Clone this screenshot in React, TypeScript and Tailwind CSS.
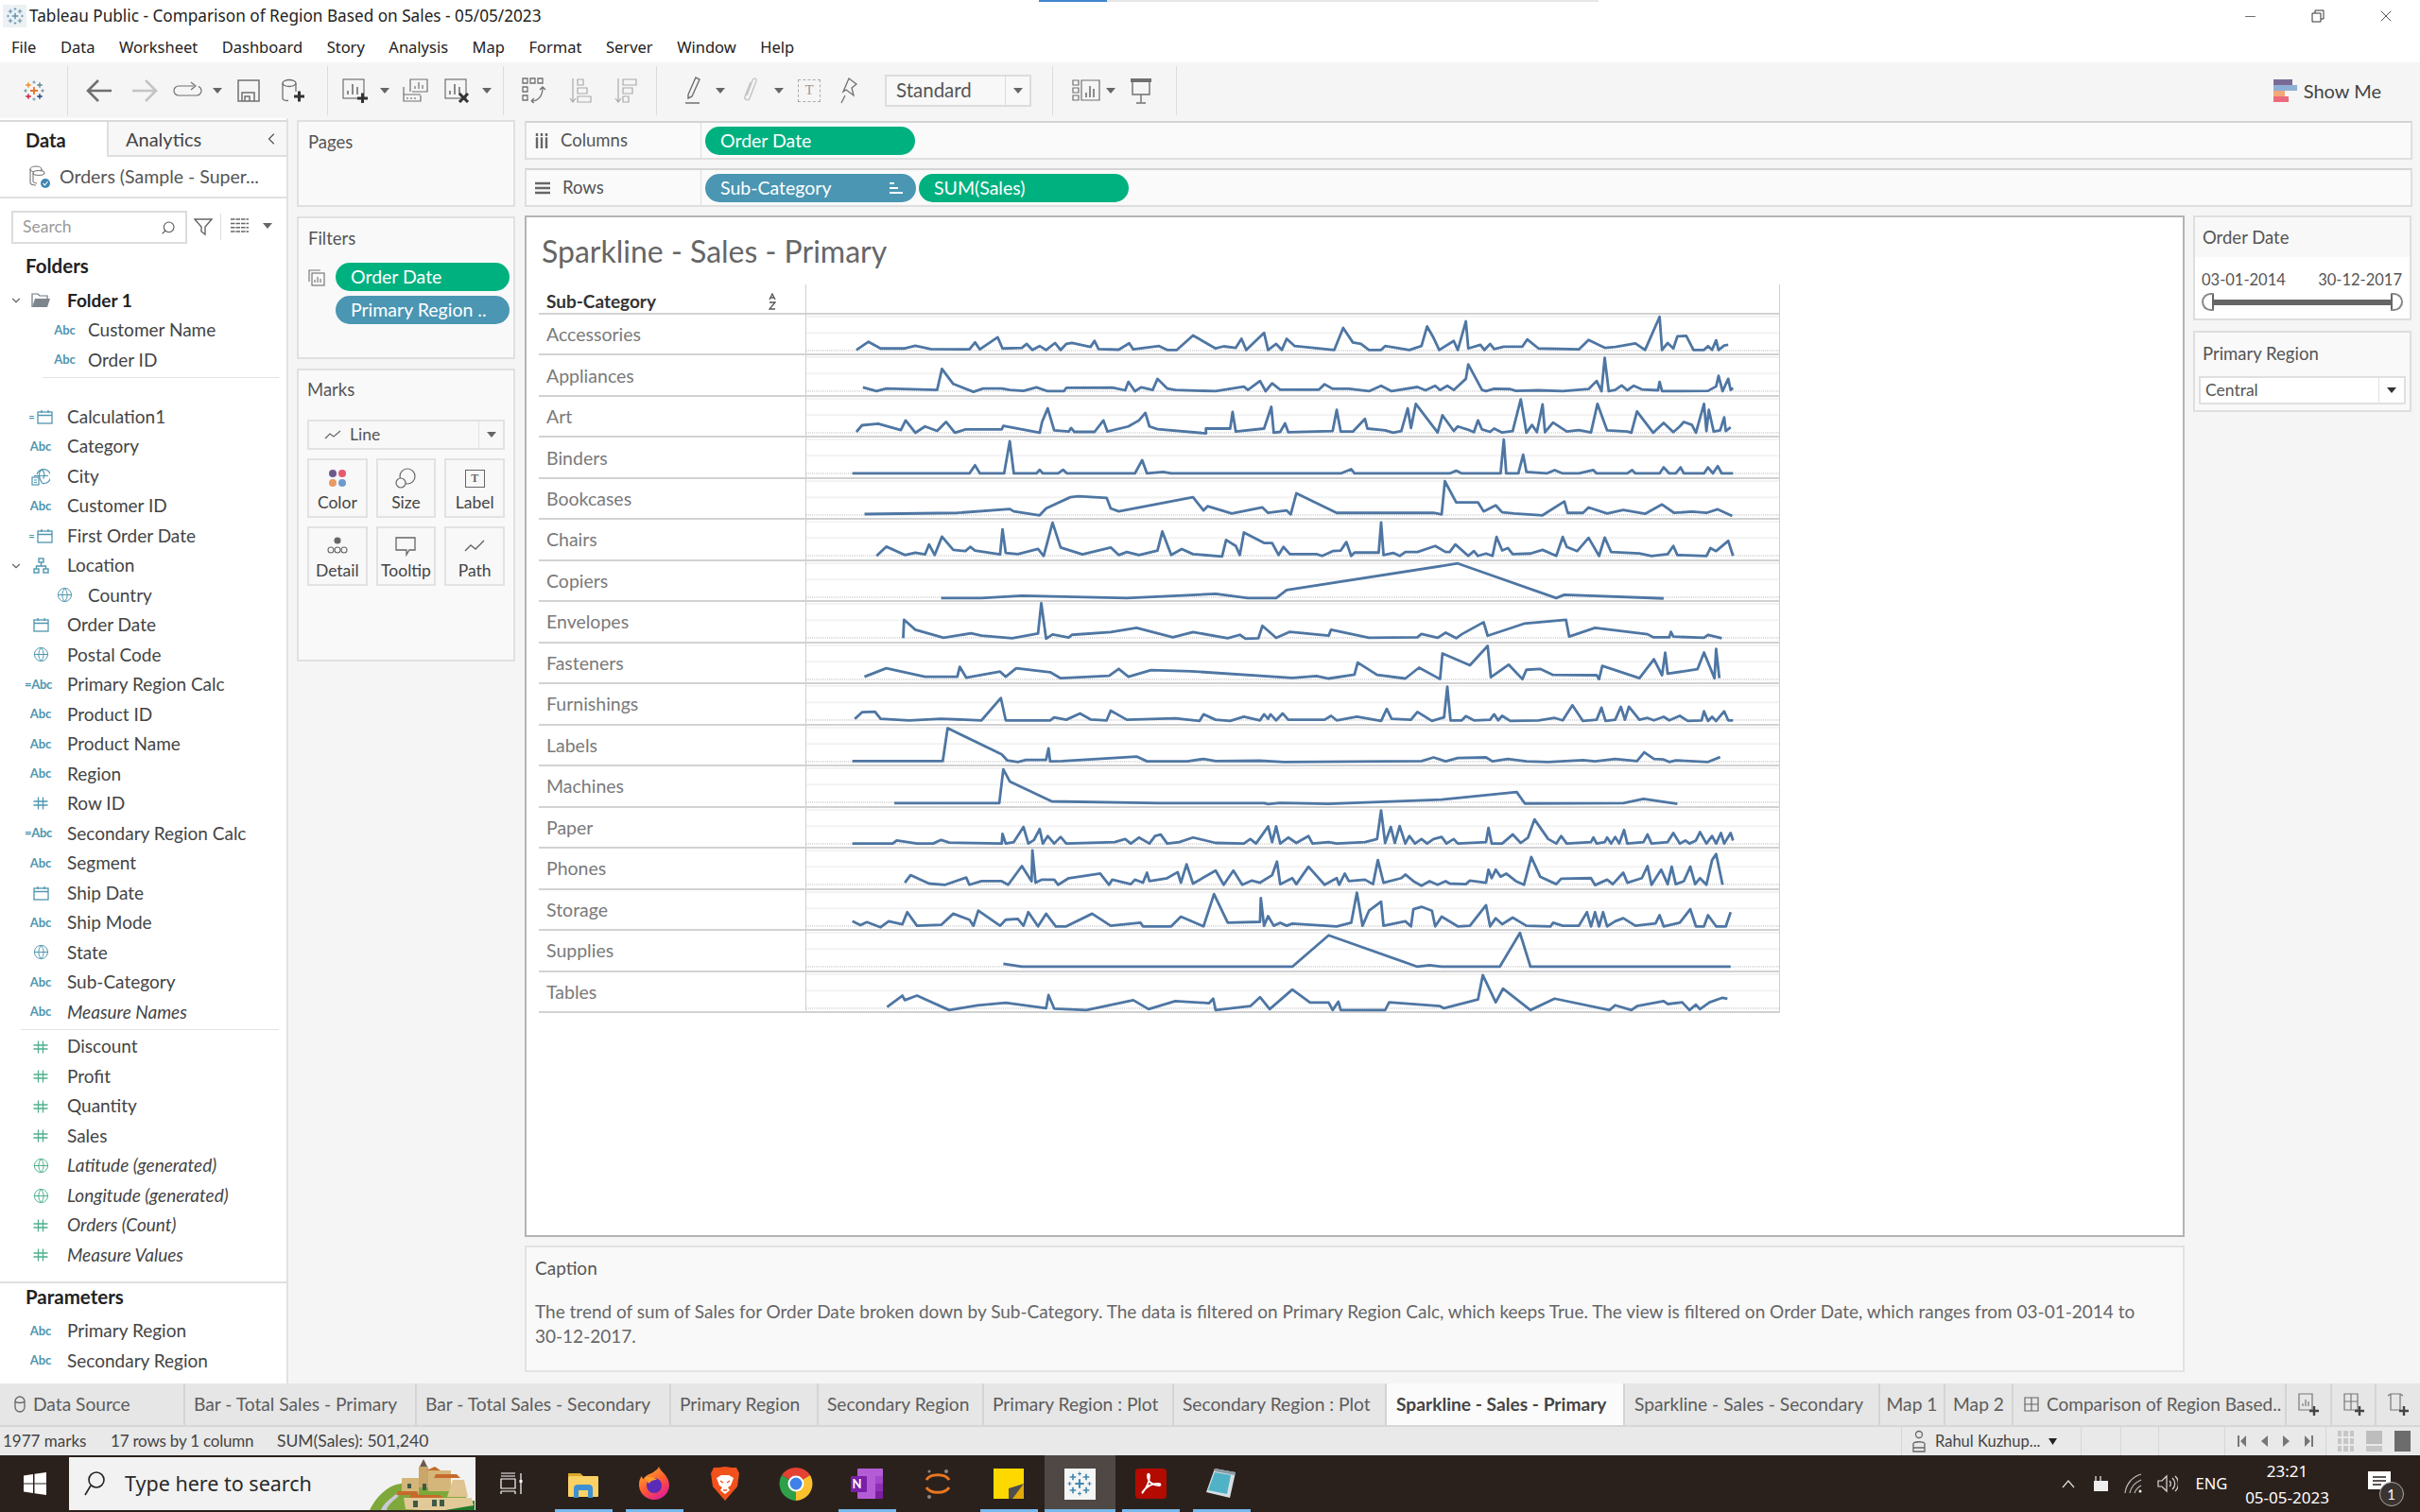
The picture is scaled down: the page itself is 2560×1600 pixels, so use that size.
import { Globe, ChevronDown, ChevronLeft, Search, Minus, X } from 'lucide-react';

const FIELD_BLUE = '#4f96b0';
const FIELD_GREEN = '#4fb08c';

const SPARKS = [
  { name: 'Accessories', top: 308, pts: '405,425 420,398 435,420 465,420 478,411 497,422 545,423 552,400 558,423 580,383 586,420 610,418 616,405 623,425 632,412 640,425 651,402 658,425 665,405 672,402 695,415 700,395 705,422 730,424 743,403 748,423 780,412 790,425 802,425 822,377 850,420 860,413 875,418 882,388 888,425 910,368 915,425 925,405 932,425 938,388 948,412 997,425 1008,352 1020,400 1030,405 1040,425 1055,425 1060,412 1090,425 1105,412 1112,347 1120,385 1127,425 1145,395 1150,425 1160,330 1163,420 1178,408 1183,425 1190,405 1195,422 1207,414 1230,414 1236,390 1250,420 1300,423 1312,392 1332,418 1345,415 1370,403 1382,425 1400,315 1403,425 1410,402 1417,420 1422,380 1433,378 1442,425 1455,425 1460,412 1465,425 1470,393 1473,425 1480,410 1485,408' },
  { name: 'Appliances', top: 437, pts: '413,543 430,556 442,547 505,552 511,482 525,532 550,558 562,547 585,547 595,552 612,555 628,543 642,556 662,556 665,545 722,544 738,553 742,525 750,556 758,543 772,552 778,515 790,547 800,552 850,556 885,541 890,552 905,522 912,556 920,530 930,551 978,551 985,533 995,548 1015,548 1040,556 1055,538 1068,556 1100,542 1110,553 1122,538 1128,552 1137,538 1145,552 1160,515 1163,467 1180,552 1185,556 1195,548 1215,549 1222,555 1250,553 1280,556 1312,549 1322,522 1328,556 1332,445 1337,556 1345,552 1353,537 1360,553 1368,538 1378,550 1398,553 1400,525 1403,556 1460,555 1470,540 1473,505 1478,556 1485,515 1488,552 1491,545' },
  { name: 'Art', top: 567, pts: '405,683 412,661 432,656 460,677 466,645 478,686 490,665 505,680 516,650 527,686 540,675 585,675 587,663 632,686 635,650 642,605 650,678 668,682 671,670 675,683 700,683 711,645 716,682 742,665 755,645 763,620 768,665 778,674 838,688 838,672 868,672 871,617 875,682 910,672 919,600 922,686 930,683 936,655 940,684 995,680 1000,610 1005,682 1020,682 1035,640 1038,672 1060,678 1070,686 1080,680 1088,605 1092,670 1098,590 1125,685 1131,628 1145,680 1150,665 1165,678 1170,684 1175,645 1180,675 1190,683 1195,672 1205,685 1218,680 1228,575 1235,686 1242,660 1248,684 1255,592 1258,684 1268,652 1285,682 1300,677 1315,685 1323,590 1335,678 1360,682 1365,686 1372,615 1392,686 1405,653 1417,684 1425,665 1430,650 1440,660 1445,686 1455,590 1458,680 1461,610 1467,682 1475,678 1480,635 1482,680 1488,668' },
  { name: 'Binders', top: 698, pts: '400,817 545,817 552,790 558,817 588,817 595,710 600,817 628,817 632,805 636,817 655,817 661,805 666,817 750,817 759,773 765,817 785,812 795,817 1005,817 1018,803 1022,817 1140,817 1148,808 1155,817 1203,817 1207,705 1210,817 1225,817 1231,755 1235,812 1260,817 1270,806 1280,817 1300,817 1318,806 1322,817 1360,817 1366,806 1370,817 1400,817 1405,797 1412,817 1420,817 1426,797 1430,817 1455,817 1460,797 1466,817 1472,793 1477,817 1491,817' },
  { name: 'Bookcases', top: 828, pts: '415,944 530,940 595,927 600,935 632,948 640,925 670,888 680,885 715,890 720,925 730,935 822,888 835,932 840,918 870,942 908,922 915,940 938,932 943,945 950,875 1000,940 1120,940 1130,945 1134,835 1148,905 1175,905 1182,935 1197,915 1205,938 1220,942 1255,948 1282,902 1286,940 1305,940 1312,922 1335,942 1355,930 1382,943 1403,912 1418,940 1440,936 1458,940 1472,928 1490,950' },
  { name: 'Chairs', top: 958, pts: '430,1078 442,1047 465,1075 478,1067 490,1073 495,1040 502,1075 511,1014 525,1058 540,1062 546,1048 552,1060 583,1073 586,990 590,1068 605,1072 630,1055 637,1078 648,968 658,1050 685,1073 720,1050 730,1075 740,1065 755,1075 778,1060 784,997 795,1075 808,1055 822,1072 858,1080 863,1025 875,1045 880,1075 885,1000 910,1035 920,1035 928,1075 934,1048 942,1072 975,1072 982,1078 995,1062 1005,1060 1012,1032 1018,1078 1022,1067 1052,1067 1055,967 1058,1075 1070,1068 1078,1078 1085,1065 1100,1065 1122,1045 1135,1065 1140,1065 1147,1040 1163,1078 1170,1062 1175,1078 1185,1070 1193,1078 1198,1015 1205,1060 1212,1052 1218,1072 1240,1070 1255,1058 1272,1078 1280,1015 1285,1048 1298,1062 1312,1018 1325,1078 1332,1017 1340,1065 1375,1070 1390,1078 1410,1072 1417,1045 1422,1075 1458,1078 1463,1052 1470,1062 1485,1028 1491,1078' },
  { name: 'Copiers', top: 1090, pts: '510,1212 560,1212 610,1204 740,1212 850,1198 890,1212 925,1212 938,1185 1150,1097 1272,1212 1282,1201 1405,1213' },
  { name: 'Envelopes', top: -12, pts: '463,108 464,47 478,80 513,107 547,92 560,100 598,108 630,93 634,-8 640,110 648,96 668,106 672,97 720,88 752,74 797,105 822,88 865,108 880,97 887,110 903,108 908,67 925,107 942,87 990,100 993,80 1040,107 1100,105 1105,94 1125,107 1135,90 1148,108 1155,95 1182,55 1187,100 1232,60 1284,47 1288,103 1320,74 1385,95 1392,105 1412,105 1414,87 1417,103 1455,107 1460,97 1477,108' },
  { name: 'Fasteners', top: 120, pts: '415,230 442,202 490,230 530,230 533,197 541,233 583,213 590,230 603,202 645,215 658,235 718,227 730,204 742,230 770,208 820,212 945,234 975,228 990,236 1022,223 1026,183 1050,224 1085,236 1102,200 1128,238 1131,153 1165,192 1187,128 1191,232 1213,190 1230,238 1235,207 1252,204 1268,224 1322,225 1325,238 1329,194 1375,235 1393,172 1403,225 1407,150 1410,220 1447,205 1455,150 1468,235 1470,138 1474,235' },
  { name: 'Furnishings', top: 250, pts: '403,365 412,343 428,341 435,365 470,370 510,365 560,370 584,296 590,370 645,370 650,360 665,368 682,347 695,367 715,370 720,338 740,368 800,363 830,372 835,350 850,368 868,372 885,358 905,370 910,350 915,365 918,350 925,370 933,347 940,368 985,368 993,355 1000,370 1025,358 1055,372 1062,332 1068,365 1092,368 1100,342 1118,372 1133,360 1137,258 1141,370 1155,370 1160,356 1170,370 1190,368 1195,350 1200,370 1205,355 1215,372 1250,370 1270,362 1280,370 1292,320 1305,372 1322,368 1328,328 1333,372 1345,368 1352,325 1357,368 1362,325 1375,368 1385,362 1393,370 1405,358 1412,370 1425,355 1435,372 1452,370 1455,340 1460,372 1465,358 1470,372 1480,340 1485,370 1491,370' },
  { name: 'Labels', top: 380, pts: '400,497 512,497 518,388 585,475 592,495 605,500 615,493 640,493 643,455 645,498 660,497 752,482 765,498 815,498 835,490 850,497 905,496 935,500 1105,497 1120,485 1135,498 1150,487 1185,485 1193,498 1212,490 1235,498 1262,500 1305,494 1320,498 1345,490 1372,497 1381,468 1393,490 1405,492 1412,500 1420,495 1460,500 1475,484' },
  { name: 'Machines', top: 510, pts: '452,632 582,632 587,520 595,560 647,626 780,632 910,632 915,635 930,631 990,634 1130,620 1223,595 1233,633 1355,632 1380,618 1422,634' },
  { name: 'Paper', top: 642, pts: '400,760 450,760 455,750 480,760 500,760 510,748 520,757 585,760 586,728 590,760 600,755 612,705 618,760 625,748 632,712 636,760 642,735 650,760 658,738 665,760 725,755 738,745 745,760 755,740 768,760 775,735 782,730 790,760 805,755 822,740 850,758 885,760 893,745 900,760 908,730 915,703 920,755 925,703 930,760 940,740 950,758 965,735 970,760 990,755 1000,760 1035,755 1050,745 1055,650 1060,758 1067,705 1072,758 1078,702 1085,760 1090,735 1097,760 1105,745 1112,760 1120,745 1130,738 1136,760 1145,745 1150,760 1185,755 1188,708 1192,760 1205,760 1218,730 1228,758 1237,740 1245,680 1262,745 1272,760 1278,735 1285,760 1315,755 1318,740 1322,760 1332,755 1335,740 1340,760 1345,738 1350,760 1356,715 1360,760 1380,755 1385,730 1390,760 1410,755 1417,725 1425,760 1432,750 1437,760 1445,750 1450,722 1458,760 1465,735 1470,760 1476,725 1480,760 1488,725 1491,750' },
  { name: 'Phones', top: 772, pts: '465,885 472,860 495,888 515,892 541,868 545,892 560,880 585,880 593,892 610,830 622,880 623,778 627,885 635,875 650,875 655,892 668,870 707,855 718,892 722,875 745,890 750,875 760,885 765,852 768,880 790,870 803,850 807,885 814,824 822,888 850,845 860,892 872,845 883,892 895,878 905,885 920,860 926,815 930,890 945,870 950,890 965,832 985,892 1000,870 1003,892 1010,855 1015,880 1035,875 1045,890 1051,810 1058,885 1080,870 1085,858 1095,880 1105,895 1115,880 1125,892 1135,880 1140,888 1160,890 1165,878 1185,885 1188,842 1192,870 1197,842 1203,865 1210,855 1222,880 1232,892 1241,800 1252,865 1272,890 1278,872 1315,870 1320,893 1335,875 1342,890 1355,852 1360,885 1378,870 1385,830 1390,892 1402,842 1410,890 1415,832 1420,890 1430,880 1438,832 1444,890 1450,870 1458,892 1465,810 1470,790 1478,892' },
  { name: 'Storage', top: 902, pts: '400,1005 410,1018 418,1008 435,1025 445,1005 462,1015 468,975 480,1020 510,1017 525,980 545,1000 550,1020 556,970 583,1020 590,1000 605,997 612,1020 618,975 630,1022 640,980 652,1022 665,1022 697,980 720,1020 757,1010 760,1022 795,1022 807,990 835,1022 848,915 865,1010 905,1007 906,928 910,1020 915,988 922,1020 930,1010 938,1020 945,1013 1000,1022 1018,1010 1025,910 1032,1020 1040,970 1055,940 1058,1020 1085,1005 1092,1022 1095,965 1105,957 1118,970 1122,1022 1130,990 1150,1022 1165,1020 1185,952 1190,1022 1197,995 1205,1015 1218,993 1235,1020 1265,1022 1268,1010 1280,1020 1300,1020 1310,975 1315,1022 1320,975 1325,1022 1330,975 1335,1022 1345,1005 1355,995 1370,1020 1395,1012 1400,985 1405,1022 1425,1010 1438,965 1445,1022 1455,1022 1460,985 1470,1022 1482,1022 1488,975' },
  { name: 'Supplies', top: 1033, pts: '587,1142 610,1152 945,1152 990,1048 1100,1152 1115,1147 1130,1152 1202,1152 1227,1040 1240,1152 1488,1152' },
  { name: 'Tables', top: 1163, pts: '443,1278 462,1240 465,1255 480,1240 520,1288 555,1272 590,1264 640,1282 643,1238 650,1283 690,1288 748,1255 767,1285 800,1258 842,1265 847,1250 850,1288 893,1275 905,1245 917,1285 945,1220 967,1263 990,1263 995,1288 1002,1260 1005,1288 1060,1288 1065,1262 1128,1275 1133,1282 1175,1253 1181,1172 1197,1262 1206,1217 1240,1288 1270,1250 1338,1288 1345,1272 1365,1288 1372,1275 1405,1258 1410,1268 1428,1262 1437,1288 1445,1270 1450,1285 1462,1262 1478,1247 1484,1250' },
];

function Plus({ x, y, r, c, w = 1.4 }: { x: number; y: number; r: number; c: string; w?: number }) {
  return <path d={`M${x - r} ${y}h${r * 2}M${x} ${y - r}v${r * 2}`} stroke={c} strokeWidth={w} fill="none" />;
}

function TableauLogo({ size, mono }: { size: number; mono?: string }) {
  const c = (v: string) => mono ?? v;
  return (
    <svg width={size} height={size} viewBox="0 0 24 24">
      <Plus x={12} y={12} r={4} c={c('#e8762b')} w={1.8} />
      <Plus x={12} y={3} r={1.7} c={c('#7099a6')} w={1} />
      <Plus x={12} y={21} r={1.7} c={c('#7099a6')} w={1} />
      <Plus x={3} y={12} r={1.7} c={c('#59879b')} w={1} />
      <Plus x={21} y={12} r={1.7} c={c('#59879b')} w={1} />
      <Plus x={6} y={6} r={2.8} c={c('#eb912b')} />
      <Plus x={18} y={6} r={2.8} c={c('#59879b')} />
      <Plus x={6} y={18} r={2.8} c={c('#c72035')} />
      <Plus x={18} y={18} r={2.8} c={c('#1f447e')} />
    </svg>
  );
}

function Caret({ className = '' }: { className?: string }) {
  return (
    <svg width="10" height="6" viewBox="0 0 10 6" className={className}>
      <path d="M0 0h10L5 6z" fill="#666" />
    </svg>
  );
}

function Sep({ className = '' }: { className?: string }) {
  return <div className={`w-px h-[52px] bg-[#dcdcdc] shrink-0 ${className}`} />;
}

function HashIcon({ color }: { color: string }) {
  return (
    <svg width="16" height="16" viewBox="0 0 16 16" fill="none" stroke={color} strokeWidth="1.3">
      <path d="M5.5 1.5v13M10.5 1.5v13M.5 6h15M.5 10h15" />
    </svg>
  );
}

function CalIcon({ color, calc }: { color: string; calc?: boolean }) {
  return (
    <div className="flex items-center gap-[2px]">
      {calc && <span className="text-[11px] leading-none font-bold" style={{ color }}>=</span>}
      <svg width="17" height="16" viewBox="0 0 17 16" fill="none" stroke={color} strokeWidth="1.3">
        <rect x="1" y="3" width="15" height="12" />
        <path d="M1 6.5h15M5 1v3M12 1v3" />
      </svg>
    </div>
  );
}

function TypeIcon({ type }: { type: string }) {
  if (type === 'abc') return <span className="text-[13px] font-bold" style={{ color: FIELD_BLUE }}>Abc</span>;
  if (type === 'eabc') return <span className="text-[13px] font-bold -ml-[5px] tracking-[-0.3px]" style={{ color: FIELD_BLUE }}>=Abc</span>;
  if (type === 'hash') return <HashIcon color={FIELD_BLUE} />;
  if (type === 'mhash') return <HashIcon color={FIELD_GREEN} />;
  if (type === 'globe') return <Globe size={17} strokeWidth={1.4} color={FIELD_BLUE} />;
  if (type === 'mglobe') return <Globe size={17} strokeWidth={1.4} color={FIELD_GREEN} />;
  if (type === 'cal') return <CalIcon color={FIELD_BLUE} />;
  if (type === 'ecal') return <CalIcon color={FIELD_BLUE} calc />;
  if (type === 'city') {
    return (
      <svg width="20" height="20" viewBox="0 0 20 20" fill="none" stroke={FIELD_BLUE} strokeWidth="1.2">
        <path d="M6 8a7.5 7.5 0 1 1 6 9.5M3 9.5h15M11 2.5c-4 4-3 10 1 15M11 2.5c4 4 3 8 1.5 10" />
        <rect x="1" y="11" width="7" height="8" fill="#fff" />
        <path d="M3 14h3M3 16.500h3" />
      </svg>
    );
  }
  if (type === 'hier') {
    return (
      <svg width="17" height="17" viewBox="0 0 17 17" fill="none" stroke={FIELD_BLUE} strokeWidth="1.4">
        <rect x="6" y="1" width="5" height="4" />
        <rect x="1" y="12" width="5" height="4" />
        <rect x="11" y="12" width="5" height="4" />
        <path d="M8.500 5v4M3.500 12V9h10v3" />
      </svg>
    );
  }
  return null;
}

function FieldRow({ type, label, nested, italic }: { type: string; label: string; nested?: boolean; italic?: boolean }) {
  return (
    <div className="h-[31.5px] flex items-center relative">
      <div className={nested ? 'w-[93px] pl-[44px] flex justify-center shrink-0' : 'w-[71px] pl-[15px] flex justify-center shrink-0'}>
        <TypeIcon type={type} />
      </div>
      {type === 'hier' && <ChevronDown size={14} color="#666" className="absolute left-[10px] top-[9px]" />}
      <span className={`text-[19px] text-[#444] whitespace-nowrap ${italic ? 'italic' : ''}`}>{label}</span>
    </div>
  );
}

function Sidebar() {
  const dims = [
    ['ecal', 'Calculation1'], ['abc', 'Category'], ['city', 'City'], ['abc', 'Customer ID'], ['ecal', 'First Order Date'],
    ['hier', 'Location'], ['globe', 'Country', 'n'], ['cal', 'Order Date'], ['globe', 'Postal Code'], ['eabc', 'Primary Region Calc'],
    ['abc', 'Product ID'], ['abc', 'Product Name'], ['abc', 'Region'], ['hash', 'Row ID'], ['eabc', 'Secondary Region Calc'],
    ['abc', 'Segment'], ['cal', 'Ship Date'], ['abc', 'Ship Mode'], ['globe', 'State'], ['abc', 'Sub-Category'], ['abc', 'Measure Names', 'i'],
  ];
  const meas = [
    ['mhash', 'Discount'], ['mhash', 'Profit'], ['mhash', 'Quantity'], ['mhash', 'Sales'], ['mglobe', 'Latitude (generated)', 'i'],
    ['mglobe', 'Longitude (generated)', 'i'], ['mhash', 'Orders (Count)', 'i'], ['mhash', 'Measure Values', 'i'],
  ];
  return (
    <aside className="w-[305px] shrink-0 bg-white border-r-2 border-[#e1e1e1] pt-[2px]">
      <div className="h-[39px] flex border-t-2 border-[#d9d9d9]">
        <div className="w-[113px] pl-[27px] flex items-center text-[20px] font-bold text-[#222]">Data</div>
        <div className="flex-1 flex items-center justify-between pl-[18px] pr-[6px] bg-[#f7f7f7] border-l-2 border-b-2 border-[#dedede] text-[20px] text-[#444]">
          Analytics
          <ChevronLeft size={20} strokeWidth={1.4} color="#555" />
        </div>
      </div>
      <div className="h-[44px] flex items-center pl-[30px] border-b-2 border-[#e0e0e0]">
        <svg width="24" height="26" viewBox="0 0 24 26" fill="none" stroke="#777" strokeWidth="1.1">
          <ellipse cx="8" cy="5" rx="6" ry="3" />
          <path d="M2 5v14c0 2 3 3 6 3M14 5v6" />
          <ellipse cx="11" cy="9" rx="6" ry="2.5" fill="#fff" />
          <path d="M5 9v9c0 1 2 2 4 2" />
          <circle cx="18" cy="20" r="5" fill="#3f86b0" stroke="none" />
          <path d="M15.5 20l2 2 3-4" stroke="#fff" />
        </svg>
        <span className="ml-[9px] text-[19.5px] text-[#555] whitespace-nowrap">Orders (Sample - Super...</span>
      </div>
      <div className="h-[48px] pt-[13px] flex pl-[12px]">
        <div className="w-[186px] h-[35px] border-2 border-[#dcdcdc] flex items-center justify-between pl-[10px] pr-[10px] text-[17.5px] text-[#9a9a9a]">
          Search
          <Search size={16} strokeWidth={1.6} color="#555" className="-scale-x-100" />
        </div>
        <svg width="20" height="20" viewBox="0 0 20 20" fill="none" stroke="#666" strokeWidth="1.4" className="ml-[7px] mt-[7px]">
          <path d="M1 2h18l-7 8v8l-4-3v-5z" />
        </svg>
        <div className="w-px h-[28px] bg-[#ddd] ml-[8px] mt-[3px]" />
        <svg width="19" height="15" viewBox="0 0 19 15" className="ml-[10px] mt-[8px]" stroke="#666" strokeWidth="1.5" strokeDasharray="4.5 1">
          <path d="M0 1h19M0 5.4h19M0 9.8h19M0 14h19" />
        </svg>
        <Caret className="ml-[15px] mt-[13px]" />
      </div>
      <div className="h-[44px] pl-[27px] pt-[10px] text-[20.5px] leading-[26px] font-bold text-[#222]">Folders</div>
      <div className="h-[31.5px] flex items-center relative pt-[1px]">
        <ChevronDown size={14} color="#666" className="absolute left-[10px] top-[9px]" />
        <svg width="21" height="16" viewBox="0 0 21 16" className="ml-[33px]">
          <path d="M1 15V1h6l2 2h8v3" fill="none" stroke="#6f7780" strokeWidth="1.2" />
          <path d="M1 15l3-9h16l-3 9z" fill="#7d858d" />
        </svg>
        <span className="ml-[17px] text-[19px] font-bold text-[#222]">Folder 1</span>
      </div>
      <FieldRow type="abc" label="Customer Name" nested />
      <FieldRow type="abc" label="Order ID" nested />
      <div className="h-[28.6px] pt-[2px] pl-[45px] pr-[8px]">
        <div className="h-px bg-[#e2e2e2]" />
      </div>
      {dims.map(([t, l, f]) => (
        <FieldRow key={l} type={t} label={l} nested={f === 'n'} italic={f === 'i'} />
      ))}
      <div className="h-[5.3px] pl-[22px] pr-[8px] pt-[2px]">
        <div className="h-px bg-[#e2e2e2]" />
      </div>
      {meas.map(([t, l, f]) => (
        <FieldRow key={l} type={t} label={l} italic={f === 'i'} />
      ))}
      <div className="h-[49px] pt-[12px]">
        <div className="h-[2px] bg-[#dfdfdf]" />
        <div className="pl-[27px] pt-[1px] text-[20.5px] leading-[26px] font-bold text-[#222]">Parameters</div>
      </div>
      <FieldRow type="abc" label="Primary Region" />
      <FieldRow type="abc" label="Secondary Region" />
    </aside>
  );
}

function Pill({ label, blue, sort, className = '' }: { label: string; blue?: boolean; sort?: boolean; className?: string }) {
  return (
    <div className={`h-[30px] rounded-full flex items-center justify-between pl-[16px] pr-[14px] text-[19.5px] text-white ${blue ? 'bg-[#4a96b3]' : 'bg-[#00b180]'} ${className}`}>
      <span className="whitespace-nowrap">{label}</span>
      {sort && (
        <svg width="14" height="14" viewBox="0 0 14 14" fill="#fff">
          <rect x="0" y="1" width="5" height="2" />
          <rect x="0" y="6" width="9" height="2" />
          <rect x="0" y="11" width="14" height="2" />
        </svg>
      )}
    </div>
  );
}

function MarkButton({ label, children }: { label: string; children: React.ReactNode }) {
  return (
    <div className="h-[63px] border-2 border-[#e2e2e2] bg-[#f8f8f8] flex flex-col items-center text-[17.5px] text-[#444]">
      <div className="h-[35px] flex items-center justify-center pt-[4px]">{children}</div>
      <span className="leading-[20px]">{label}</span>
    </div>
  );
}

function CardsColumn() {
  return (
    <div className="w-[231px] ml-[9px] shrink-0 pt-[2px] flex flex-col gap-[10px]">
      <div className="h-[92px] border-2 border-[#e0e0e0] bg-[#f9f9f9] pl-[10px] pt-[8px] text-[18.5px] text-[#555]">Pages</div>
      <div className="h-[151px] border-2 border-[#e0e0e0] bg-[#f9f9f9] relative pl-[10px] pt-[8px] text-[18.5px] text-[#555]">
        Filters
        <div className="mt-[11px] flex gap-[11px]">
          <svg width="18" height="18" viewBox="0 0 18 18" fill="none" stroke="#777" strokeWidth="1.2" className="mt-[7px] shrink-0">
            <path d="M1 13V1h12" />
            <rect x="4" y="4" width="13" height="13" />
            <path d="M7 14v-3M10 14V8M13 14v-4" />
          </svg>
          <div className="flex flex-col gap-[5px] w-[184px]">
            <Pill label="Order Date" />
            <Pill label="Primary Region .." blue className="pr-[8px]" />
          </div>
        </div>
      </div>
      <div className="h-[310px] border-2 border-[#e0e0e0] bg-[#f9f9f9] pl-[9px] pr-[9px] pt-[7px] text-[18.5px] text-[#555]">
        Marks
        <div className="mt-[17px] h-[32px] border-2 border-[#e2e2e2] bg-[#f8f8f8] flex items-center">
          <svg width="18" height="12" viewBox="0 0 18 12" fill="none" stroke="#666" strokeWidth="1.2" className="ml-[16px]">
            <path d="M1 10l5-5 4 3 7-6" />
          </svg>
          <span className="ml-[9px] flex-1 text-[17.5px] text-[#555]">Line</span>
          <div className="w-[26px] h-full border-l border-[#e2e2e2] flex items-center justify-center">
            <Caret />
          </div>
        </div>
        <div className="mt-[9px] grid grid-cols-3 gap-[9px]">
          <MarkButton label="Color">
            <svg width="20" height="20" viewBox="0 0 20 20">
              <circle cx="5" cy="5" r="4" fill="#6d5a8d" />
              <circle cx="15" cy="5" r="4" fill="#e65a6d" />
              <circle cx="5" cy="15" r="4" fill="#e89a63" />
              <circle cx="15" cy="15" r="4" fill="#6e9bcd" />
            </svg>
          </MarkButton>
          <MarkButton label="Size">
            <svg width="22" height="22" viewBox="0 0 22 22" fill="none" stroke="#666" strokeWidth="1.2">
              <circle cx="13" cy="9" r="8" />
              <circle cx="6" cy="16" r="5" fill="#f8f8f8" />
            </svg>
          </MarkButton>
          <MarkButton label="Label">
            <div className="w-[21px] h-[19px] border border-[#666] flex items-center justify-center text-[12px] font-bold font-[family-name:'Liberation_Serif',serif] text-[#666]">T</div>
          </MarkButton>
          <MarkButton label="Detail">
            <svg width="24" height="20" viewBox="0 0 24 20" fill="none" stroke="#666" strokeWidth="1.1">
              <circle cx="12" cy="4" r="3" fill="#666" />
              <circle cx="5" cy="14" r="3" />
              <circle cx="12" cy="14" r="3" />
              <circle cx="19" cy="14" r="3" />
            </svg>
          </MarkButton>
          <MarkButton label="Tooltip">
            <svg width="22" height="22" viewBox="0 0 22 22" fill="none" stroke="#666" strokeWidth="1.3">
              <path d="M1 2h20v13h-6l-3 5v-5H1z" />
            </svg>
          </MarkButton>
          <MarkButton label="Path">
            <svg width="22" height="14" viewBox="0 0 22 14" fill="none" stroke="#666" strokeWidth="1.4">
              <path d="M1 12l6-6 5 4 9-9" />
            </svg>
          </MarkButton>
        </div>
      </div>
    </div>
  );
}

function SparkRow({ name, top, pts }: { name: string; top: number; pts: string }) {
  return (
    <div className="flex h-[43.47px] border-b-2 border-[#d2d2d2]">
      <div className="w-[282px] pl-[8px] flex items-center text-[19.5px] text-[#7a7a7a] shrink-0">{name}</div>
      <div className="w-[1031px] border-l border-r border-[#cfcfcf] shrink-0">
        <svg width="100%" height="100%" viewBox={`343 ${top} 1205 130`} preserveAspectRatio="none" className="block overflow-visible">
          <line x1="343" x2="1548" y1={top + 6} y2={top + 6} stroke="#f3f3f3" strokeWidth="2" vectorEffect="non-scaling-stroke" />
          <line x1="343" x2="1548" y1={top + 60} y2={top + 60} stroke="#f3f3f3" strokeWidth="2" vectorEffect="non-scaling-stroke" />
          <line x1="343" x2="1548" y1={top + 119} y2={top + 119} stroke="#bbb" strokeWidth="1" strokeDasharray="1 1" vectorEffect="non-scaling-stroke" />
          <polyline points={pts} fill="none" stroke="#4e76a3" strokeWidth="2.8" strokeLinejoin="round" vectorEffect="non-scaling-stroke" />
        </svg>
      </div>
    </div>
  );
}

function Viz() {
  return (
    <div className="h-[1081px] border-2 border-[#b4b4b4] bg-white pl-[13px]">
      <div className="h-[71px] pt-[16px] pl-[3px] text-[32px] leading-[40px] text-[#666]">Sparkline - Sales - Primary</div>
      <div className="flex h-[32px] border-b-2 border-[#d2d2d2] w-[1313px]">
        <div className="w-[282px] pl-[8px] pr-[31px] pt-[6px] flex items-center justify-between text-[19px] font-bold text-[#333] shrink-0">
          Sub-Category
          <svg width="8" height="18" viewBox="0 0 8 18" fill="none" stroke="#555" strokeWidth="1.3">
            <path d="M1 7l3-6 3 6M2 5h4M1 10h6l-6 7h6" />
          </svg>
        </div>
        <div className="w-[1031px] border-l border-r border-[#cfcfcf]" />
      </div>
      <div className="w-[1313px]">
        {SPARKS.map((s) => (
          <SparkRow key={s.name} {...s} />
        ))}
      </div>
    </div>
  );
}

function Shelf({ label, icon, children }: { label: string; icon: React.ReactNode; children: React.ReactNode }) {
  return (
    <div className="h-[41px] border-2 border-[#dedede] border-t-[#d4d4d4] bg-[#fafafa] flex items-stretch">
      <div className="w-[185px] border-r border-[#dedede] flex items-center pl-[9px] gap-[13px] text-[18.5px] text-[#555] shrink-0">
        {icon}
        {label}
      </div>
      <div className="flex items-center pl-[3px] gap-[3px]">{children}</div>
    </div>
  );
}

function RightColumn() {
  return (
    <div className="w-[231px] ml-[9px] shrink-0 flex flex-col gap-[11px]">
      <div className="h-[111px] border-2 border-[#dedede] bg-white">
        <div className="h-[42px] bg-[#f8f8f8] pl-[8px] pt-[1px] flex items-center text-[18.5px] text-[#555]">Order Date</div>
        <div className="pl-[7px] pr-[8px] pt-[13px] flex justify-between text-[16.5px] leading-[22px] text-[#555]">
          <span>03-01-2014</span>
          <span>30-12-2017</span>
        </div>
        <div className="mx-[7px] mt-[3px] h-[19px] flex items-center">
          <div className="w-[13px] h-[19px] rounded-l-full border-2 border-[#888] border-r-[#666] bg-white" />
          <div className="flex-1 h-[6px] bg-[#666]" />
          <div className="w-[13px] h-[19px] rounded-r-full border-2 border-[#888] border-l-[#666] bg-white" />
        </div>
      </div>
      <div className="h-[86px] border-2 border-[#dedede] bg-[#f9f9f9] px-[4px]">
        <div className="h-[46px] pl-[4px] flex items-center text-[18.5px] text-[#555]">Primary Region</div>
        <div className="h-[30px] border-2 border-[#e0e0e0] bg-white flex items-center justify-between pl-[5px] text-[17.5px] text-[#555]">
          Central
          <div className="w-[27px] h-full border-l border-[#e2e2e2] flex items-center justify-center">
            <svg width="10" height="6" viewBox="0 0 10 6"><path d="M0 0h10L5 6z" fill="#333" /></svg>
          </div>
        </div>
      </div>
    </div>
  );
}

function Toolbar() {
  return (
    <div className="h-[59px] bg-[#f5f5f5] flex items-center">
      <div className="w-[71px] flex justify-center shrink-0">
        <TableauLogo size={24} />
      </div>
      <Sep />
      <svg width="28" height="26" viewBox="0 0 28 26" fill="none" stroke="#707070" strokeWidth="2.6" className="ml-[19px]">
        <path d="M27 13H3M13 2L2 13l11 11" />
      </svg>
      <svg width="28" height="26" viewBox="0 0 28 26" fill="none" stroke="#c4c4c4" strokeWidth="2.6" className="ml-[20px]">
        <path d="M1 13h24M15 2l11 11-11 11" />
      </svg>
      <svg width="31" height="20" viewBox="0 0 31 20" fill="none" stroke="#707070" strokeWidth="1.2" className="ml-[16px]">
        <path d="M22 5H6a5 5 0 0 0 0 10h19a5 5 0 0 0 5-5 5 5 0 0 0-3-4.5M19 1l5 4-5 4" />
      </svg>
      <Caret className="ml-[11px]" />
      <svg width="24" height="24" viewBox="0 0 24 24" fill="none" stroke="#707070" strokeWidth="1.5" className="ml-[16px]">
        <rect x="1" y="1" width="22" height="22" />
        <path d="M5 23v-9h13v9M8 23v-5h5v5" />
      </svg>
      <svg width="24" height="26" viewBox="0 0 24 26" fill="none" stroke="#707070" strokeWidth="1.3" className="ml-[23px]">
        <ellipse cx="8" cy="5" rx="7" ry="3.5" />
        <path d="M1 5v16c0 1.5 3 2.5 6 2.5M15 5v9" />
        <path d="M13 19h11M18.5 13.5v11" stroke="#333" strokeWidth="3" />
      </svg>
      <Sep className="ml-[24px]" />
      <svg width="28" height="26" viewBox="0 0 28 26" fill="none" stroke="#707070" strokeWidth="1.2" className="ml-[15px]">
        <rect x="1" y="1" width="22" height="20" />
        <path d="M6 17v-4M11 17V6M16 17V9" strokeWidth="1.6" />
        <path d="M16 21h11M21.5 15.5v11" stroke="#333" strokeWidth="3" />
      </svg>
      <Caret className="ml-[12px]" />
      <svg width="27" height="26" viewBox="0 0 27 26" fill="none" stroke="#707070" strokeWidth="1.2" className="ml-[14px]">
        <path d="M8 14V1h18v13H10" />
        <path d="M13 11V8M17 11V4M21 11V7" />
        <path d="M1 9v15h18v-6M1 17h18" />
        <path d="M5 22v-2M9 22v-2M13 22v-2" />
      </svg>
      <svg width="28" height="26" viewBox="0 0 28 26" fill="none" stroke="#707070" strokeWidth="1.2" className="ml-[17px]">
        <rect x="1" y="1" width="22" height="20" />
        <path d="M6 17v-4M11 17V6M16 17V9" strokeWidth="1.6" />
        <path d="M16 16l9 9M25 16l-9 9" stroke="#333" strokeWidth="3" />
      </svg>
      <Caret className="ml-[12px]" />
      <Sep className="ml-[12px]" />
      <svg width="26" height="28" viewBox="0 0 26 28" fill="none" stroke="#707070" strokeWidth="1.3" className="ml-[19px]">
        <path d="M1 1h5v5H1zM9 1h5v5H9zM17 1h5v5h-5zM1 10h5v5H1zM1 19h5v5H1z" />
        <path d="M10 25c7 0 12-5 12-14M19 13l3-3 3 3M10 25l3-3M10 25l3 2" />
      </svg>
      <svg width="24" height="28" viewBox="0 0 24 28" fill="none" stroke="#aaa" strokeWidth="1.2" className="ml-[24px]">
        <path d="M4 1v24M1 22l3 4 3-4M9 2h6v6H9zM9 11h10v6H9zM9 20h14v6H9z" />
      </svg>
      <svg width="24" height="28" viewBox="0 0 24 28" fill="none" stroke="#aaa" strokeWidth="1.2" className="ml-[24px]">
        <path d="M4 1v24M1 22l3 4 3-4M9 2h14v6H9zM9 11h10v6H9zM9 20h6v6H9z" />
      </svg>
      <Sep className="ml-[20px]" />
      <svg width="20" height="30" viewBox="0 0 20 30" fill="none" stroke="#707070" strokeWidth="1.4" className="ml-[28px]">
        <path d="M5 19L13 1l4 2-8 18-4 2zM2 28h15" />
      </svg>
      <Caret className="ml-[14px]" />
      <svg width="18" height="30" viewBox="0 0 18 30" fill="none" stroke="#c4c4c4" strokeWidth="1.4" className="ml-[17px]">
        <path d="M6 20L12 4c1-3 5-2 4 1L9 23c-1 3-6 2-5-2l6-15" />
      </svg>
      <Caret className="ml-[17px]" />
      <div className="ml-[15px] w-[24px] h-[24px] border border-dashed border-[#aaa] flex items-center justify-center text-[15px] text-[#999] font-[family-name:'Liberation_Serif',serif]">T</div>
      <svg width="20" height="28" viewBox="0 0 20 28" fill="none" stroke="#707070" strokeWidth="1.3" className="ml-[21px]">
        <path d="M9 1l8 6-5 4 2 8-8-6-3 2zM5 19l-4 8" />
      </svg>
      <div className="ml-[27px] w-[155px] h-[34px] border-2 border-[#dcdcdc] bg-[#f8f8f8] flex items-center justify-between pl-[10px] text-[20.5px] text-[#555]">
        Standard
        <div className="w-[26px] h-full border-l border-[#dcdcdc] flex items-center justify-center">
          <Caret />
        </div>
      </div>
      <Sep className="ml-[22px]" />
      <svg width="30" height="26" viewBox="0 0 30 26" fill="none" stroke="#707070" strokeWidth="1.2" className="ml-[20px]">
        <path d="M1 2h6v5H1zM1 10h6v5H1zM1 18h6v5H1zM10 2h19v21H10z" />
        <path d="M15 20v-5M19 20V8M23 20v-9" strokeWidth="1.6" />
      </svg>
      <Caret className="ml-[6px]" />
      <svg width="24" height="28" viewBox="0 0 24 28" fill="none" stroke="#707070" strokeWidth="1.4" className="ml-[15px]">
        <path d="M1 3h22" strokeWidth="4" />
        <path d="M3 5v13h18V5M12 18v8M7 27h10" />
      </svg>
      <Sep className="ml-[25px]" />
      <div className="ml-auto mr-[41px] flex items-center gap-[7px] text-[20px] text-[#444]">
        <div className="flex flex-col">
          <div className="w-[20px] h-[6px] bg-[#7c6a96]" />
          <div className="w-[25px] h-[6px] bg-[#8fb0d6]" />
          <div className="w-[12px] h-[6px] bg-[#f2a878]" />
          <div className="w-[16px] h-[6px] bg-[#ec6a7d]" />
        </div>
        Show Me
      </div>
    </div>
  );
}

const TABS = [
  { label: 'Bar - Total Sales - Primary', w: 'w-[245px]' },
  { label: 'Bar - Total Sales - Secondary', w: 'w-[269px]' },
  { label: 'Primary Region', w: 'w-[156px]' },
  { label: 'Secondary Region', w: 'w-[175px]' },
  { label: 'Primary Region : Plot', w: 'w-[201px]' },
  { label: 'Secondary Region : Plot', w: 'w-[225px]' },
];

function TabBar() {
  return (
    <div className="h-[46px] bg-[#e6e6e6] border-b-2 border-[#d6d6d6] flex text-[19.2px] text-[#5c5c5c]">
      <div className="w-[196px] flex items-center pl-[15px] gap-[8px] border-r-2 border-[#d4d4d4] shrink-0">
        <svg width="12" height="18" viewBox="0 0 12 18" fill="none" stroke="#666" strokeWidth="1.3">
          <rect x="1" y="1" width="10" height="16" rx="5" />
          <path d="M1 6c2 2 8 2 10 0" />
        </svg>
        Data Source
      </div>
      {TABS.map((t) => (
        <div key={t.label} className={`${t.w} flex items-center pl-[9px] border-r-2 border-[#d4d4d4] whitespace-nowrap shrink-0`}>
          {t.label}
        </div>
      ))}
      <div className="w-[252px] flex items-center pl-[10px] bg-[#fbfbfb] font-bold text-[#444] border-r-2 border-[#d4d4d4] whitespace-nowrap shrink-0">
        Sparkline - Sales - Primary
      </div>
      <div className="w-[270px] flex items-center pl-[10px] border-r-2 border-[#d4d4d4] whitespace-nowrap shrink-0">Sparkline - Sales - Secondary</div>
      <div className="w-[69px] flex items-center justify-center border-r-2 border-[#d4d4d4] shrink-0">Map 1</div>
      <div className="w-[72px] flex items-center justify-center border-r-2 border-[#d4d4d4] shrink-0">Map 2</div>
      <div className="w-[287px] flex items-center pl-[11px] gap-[8px] whitespace-nowrap shrink-0 overflow-hidden text-[19px]">
        <svg width="16" height="16" viewBox="0 0 16 16" fill="none" stroke="#666" strokeWidth="1.2" className="shrink-0">
          <path d="M1 1h14v14H1zM8 1v14M1 8h14" />
        </svg>
        Comparison of Region Based..
      </div>
      {[0, 1, 2].map((i) => (
        <div key={i} className="flex-1 border-l-2 border-[#d4d4d4] flex items-center justify-center">
          <svg width="24" height="26" viewBox="0 0 24 26" fill="none" stroke="#777" strokeWidth="1.2">
            {i === 0 && <path d="M2 2h14v17H2zM6 15v-3M9 15V8M12 15v-5" />}
            {i === 1 && <path d="M2 2h14v17H2zM9 2v17M2 10h14" />}
            {i === 2 && <path d="M4 2h10v17H4zM1 4l3-2M14 2l3 2" />}
            <path d="M13 20h10M18 15v10" stroke="#444" strokeWidth="2.4" />
          </svg>
        </div>
      ))}
    </div>
  );
}

function StatusBar() {
  return (
    <div className="h-[30px] bg-[#e9e9e9] flex items-stretch text-[17px] text-[#444]">
      <span className="ml-[3px] w-[114px] self-center">1977 marks</span>
      <span className="w-[176px] self-center tracking-[-0.2px]">17 rows by 1 column</span>
      <span className="self-center text-[17.5px]">SUM(Sales): 501,240</span>
      <div className="ml-auto flex items-stretch">
        <div className="w-[190px] border-l border-[#d6d6d6] flex items-center pl-[10px] gap-[9px]">
          <svg width="16" height="24" viewBox="0 0 16 24" fill="none" stroke="#666" strokeWidth="1.3">
            <circle cx="8" cy="5" r="3.5" />
            <path d="M2 23v-8c0-3 12-3 12 0v8zM2 19h12" />
          </svg>
          <span className="text-[16.5px]">Rahul Kuzhup...</span>
          <svg width="9" height="7" viewBox="0 0 9 7"><path d="M0 0h9L4.5 7z" fill="#222" /></svg>
        </div>
        <div className="w-[42px] border-l border-[#d6d6d6]" />
        <div className="w-[40px] border-l border-[#d6d6d6]" />
        <div className="w-[70px] border-l border-[#d6d6d6]" />
        <div className="w-[107px] border-l border-[#d6d6d6] flex items-center justify-center gap-[16px]">
          <svg width="9" height="12" viewBox="0 0 9 12" fill="#777"><path d="M0 0h2v12H0zM9 0v12L3 6z" /></svg>
          <svg width="7" height="12" viewBox="0 0 7 12" fill="#777"><path d="M7 0v12L0 6z" /></svg>
          <svg width="7" height="12" viewBox="0 0 7 12" fill="#777"><path d="M0 0v12l7-6z" /></svg>
          <svg width="9" height="12" viewBox="0 0 9 12" fill="#777"><path d="M9 0H7v12h2zM0 0v12l6-6z" /></svg>
        </div>
        <div className="w-[100px] border-l border-[#d6d6d6] flex items-center gap-[13px] pl-[12px]">
          <div className="w-[17px] h-[22px] grid grid-cols-3 gap-[2px]">
            {[0, 1, 2, 3, 4, 5, 6, 7, 8].map((i) => <div key={i} className="bg-[#c6c6c6]" />)}
          </div>
          <div className="w-[17px] h-[22px] flex flex-col gap-[2px]">
            <div className="h-[14px] bg-[#bdbdbd]" />
            <div className="h-[6px] bg-[#c6c6c6]" />
          </div>
          <div className="w-[17px] h-[22px] bg-[#6c6c6c]" />
        </div>
      </div>
    </div>
  );
}

function Castle() {
  return (
    <svg width="116" height="56" viewBox="0 0 116 56">
      <path d="M4 56C14 36 30 26 44 28L96 36 115 48V56z" fill="#7fa83a" />
      <path d="M92 50l23-4v10H80z" fill="#1f7a2c" />
      <path d="M16 56c3-8 10-12 16-17 2-3 3 0 2 3-6 5-11 9-12 14z" fill="#c9c9d6" />
      <path d="M56 10h10v22H56z" fill="#caa668" />
      <path d="M57 10l4-8 4 8z" fill="#6a5a50" />
      <path d="M38 22h18v18H38zM66 14h24v22H66z" fill="#d5b67a" />
      <path d="M64 14l9-4 6 4zM72 22h28l-4-4H74z" fill="#c66a2c" />
      <path d="M92 24h12l4 18H86z" fill="#dfc48f" />
      <path d="M34 36h20l2 4H32zM48 40h30l4 3H46z" fill="#c66a2c" />
      <path d="M40 43h72l2 8-36 6-36-2z" fill="#e2ca98" />
      <path d="M50 46h5v7h-5zM70 45h5v7h-5zM78 45h5v7h-5zM60 28h4v7h-4zM44 28h4v5h-4z" fill="#3c5a48" />
    </svg>
  );
}

function Taskbar() {
  const run = 'absolute bottom-0 left-[7px] w-[61px] h-[3px] bg-[#76b9ed]';
  const slot = 'w-[75px] h-full relative flex items-center justify-center shrink-0';
  return (
    <div className="h-[60px] bg-[#2b211c] flex items-stretch text-white">
      <div className="w-[73px] flex items-center justify-center shrink-0">
        <svg width="24" height="24" viewBox="0 0 24 24" fill="#fff">
          <path d="M0 3.5L10 2v9.5H0zM11.500 1.800L24 0v11.500H11.500zM0 12.500h10V22L0 20.500zM11.500 12.500H24V24l-12.500-1.800z" />
        </svg>
      </div>
      <div className="w-[430px] my-[2px] bg-[#f2f2f2] flex items-center relative shrink-0 overflow-hidden">
        <svg width="24" height="28" viewBox="0 0 24 28" fill="none" stroke="#222" strokeWidth="1.6" className="ml-[15px]">
          <circle cx="14" cy="10" r="8" />
          <path d="M8 16L2 26" />
        </svg>
        <span className="ml-[20px] text-[21.5px] text-[#2a2a2a] font-[family-name:'Noto_Sans',sans-serif]">Type here to search</span>
        <div className="ml-auto self-end">
          <Castle />
        </div>
      </div>
      <div className="w-[76.5px] flex items-center justify-center shrink-0">
        <svg width="24" height="24" viewBox="0 0 24 24" fill="none" stroke="#fff" strokeWidth="1.2">
          <path d="M1 1h15M1 4h15M1 20h15M1 23M1 7h15v10H1zM1 23V20M16 23v-3M22 1v22" />
          <rect x="20.500" y="8" width="3" height="3" fill="#fff" stroke="none" />
        </svg>
      </div>
      <div className={slot}>
        <svg width="32" height="30" viewBox="0 0 32 30">
          <path d="M0 4h13l3 3H0z" fill="#d9a92b" />
          <rect x="0" y="7" width="32" height="22" rx="1" fill="#fad165" />
          <path d="M6 30V20c0-3 2-4 4-4h12c2 0 4 1 4 4v10h-5v-8H11v8z" fill="#3d90d1" />
        </svg>
        <div className={run} />
      </div>
      <div className={slot}>
        <svg width="34" height="36" viewBox="0 0 34 36">
          <defs>
            <linearGradient id="ff" x1="0" y1="0" x2="0.6" y2="1">
              <stop offset="0" stopColor="#ffbd2e" />
              <stop offset="0.6" stopColor="#ff5a2e" />
              <stop offset="1" stopColor="#e5218f" />
            </linearGradient>
          </defs>
          <path d="M22 0c1 5 11 9 11 20a16 16 0 1 1-32-2c0-4 2-7 3-8 0 2 1 3 2 3 2-4 6-5 10-7 2-2 5-3 6-6z" fill="url(#ff)" />
          <circle cx="17" cy="20" r="8" fill="#5a2bb8" />
          <path d="M6 12c4-2 10-2 14 2-4 0-7 1-8 4-2-2-4-4-6-6z" fill="#ff9a2e" />
        </svg>
        <div className={run} />
      </div>
      <div className={slot}>
        <svg width="30" height="36" viewBox="0 0 30 36">
          <path d="M15 0l7 1 5 0 3 6-2 14-13 15L2 21 0 7l3-6 5 0z" fill="#f1511b" />
          <path d="M6 12l5-3h8l5 3-3 8-3 2 2 3-5 4-5-4 2-3-3-2z" fill="#fff" />
          <path d="M10 15l3 2M20 15l-3 2M13 25h4" stroke="#f1511b" strokeWidth="1.5" />
        </svg>
      </div>
      <div className={slot}>
        <svg width="36" height="36" viewBox="0 0 36 36">
          <path d="M18 18L3 9A18 18 0 0 1 33 9z" fill="#e34133" />
          <path d="M18 18L3 9A18 18 0 0 0 18 36z" fill="#2fa04a" />
          <path d="M18 18L33 9A18 18 0 0 1 18 36z" fill="#fbc02d" />
          <circle cx="18" cy="18" r="8.500" fill="#fff" />
          <circle cx="18" cy="18" r="6.500" fill="#3f81e8" />
        </svg>
      </div>
      <div className={slot}>
        <svg width="34" height="32" viewBox="0 0 34 32">
          <rect x="7" y="0" width="27" height="32" rx="1" fill="#b45cd6" />
          <rect x="26" y="8" width="8" height="8" fill="#a347c8" />
          <rect x="26" y="16" width="8" height="8" fill="#8f2fb8" />
          <rect x="26" y="24" width="8" height="8" fill="#7b1fa2" />
          <rect x="0" y="8" width="17" height="17" rx="1" fill="#7a1fa8" />
        </svg>
        <span className="absolute left-[22px] top-[21px] text-[13px] font-bold text-white">N</span>
        <div className={run} />
      </div>
      <div className={slot}>
        <svg width="30" height="32" viewBox="0 0 30 32" fill="none">
          <path d="M3 12c4-7 20-7 24 0" stroke="#e87722" strokeWidth="3" />
          <path d="M3 20c4 7 20 7 24 0" stroke="#e87722" strokeWidth="3" />
          <circle cx="24" cy="3" r="2" fill="#8a8a8a" />
          <circle cx="6" cy="3" r="1.500" fill="#8a8a8a" />
          <circle cx="6" cy="30" r="2" fill="#8a8a8a" />
        </svg>
      </div>
      <div className={slot}>
        <svg width="32" height="32" viewBox="0 0 32 32">
          <path d="M0 0h32v20L20 32H0z" fill="#ffd800" />
          <path d="M32 16v16H16z" fill="#e0a90c" />
          <path d="M16 32V21l16-5-12 16z" fill="#4e4e4e" />
        </svg>
        <div className={run} />
      </div>
      <div className={`${slot} bg-[#4f4844]`}>
        <div className="w-[33px] h-[33px] bg-[#f4f5f5] flex items-center justify-center">
          <TableauLogo size={28} mono="#3f86b0" />
        </div>
        <div className="absolute bottom-0 left-0 w-full h-[3px] bg-[#76b9ed]" />
      </div>
      <div className={slot}>
        <div className="w-[33px] h-[32px] rounded-[4px] bg-[#b30b00] flex items-center justify-center">
          <svg width="24" height="24" viewBox="0 0 24 24" fill="none" stroke="#fff" strokeWidth="1.8">
            <path d="M3 21c4-2 8-11 8-17 0-3-2-3-2 0 0 6 6 10 12 10 2 0 2-2 0-2-6-1-14 3-17 9-1 1 0 1-1 0" />
          </svg>
        </div>
        <div className={run} />
      </div>
      <div className={slot}>
        <svg width="34" height="34" viewBox="0 0 34 34">
          <path d="M10 1l22 4-6 27L1 26z" fill="#d8dfe3" />
          <path d="M10 5l17 3-4 20L3 24z" fill="#4fb2c7" />
          <path d="M10 1l22 4-1 3L10 4z" fill="#8a9aa3" />
        </svg>
        <div className={run} />
      </div>
      <div className="flex-1 flex items-center relative">
        <svg width="14" height="9" viewBox="0 0 14 9" fill="none" stroke="#ddd" strokeWidth="1.2" className="absolute left-[851px] top-[26px]">
          <path d="M1 8l6-7 6 7" />
        </svg>
        <svg width="20" height="20" viewBox="0 0 20 20" className="absolute left-[882px] top-[20px]">
          <rect x="3" y="7" width="15" height="11" fill="#eee" />
          <path d="M5 2v5M10 2v5" stroke="#eee" strokeWidth="1.2" />
        </svg>
        <svg width="20" height="22" viewBox="0 0 20 22" fill="none" stroke="#bbb" strokeWidth="1.2" className="absolute left-[917px] top-[19px]">
          <path d="M1 21C2 12 8 4 18 1M6 21c1-6 5-11 12-14M11 21c1-3 3-6 7-8" />
          <circle cx="17" cy="19" r="1.500" fill="#eee" stroke="none" />
        </svg>
        <svg width="22" height="22" viewBox="0 0 22 22" fill="none" stroke="#ddd" strokeWidth="1.2" className="absolute left-[952px] top-[19px]">
          <path d="M1 8h4l5-5v16l-5-5H1zM13 8a4 4 0 0 1 0 6M16 5a8 8 0 0 1 0 12M19 3a11 11 0 0 1 0 16" />
        </svg>
        <span className="absolute left-[993px] top-[18px] text-[16.5px] font-[family-name:'Noto_Sans',sans-serif]">ENG</span>
        <div className="absolute left-[1040px] top-[3px] w-[100px] text-center text-[17px] leading-[28px] font-[family-name:'Noto_Sans',sans-serif] whitespace-nowrap">
          <div>23:21</div>
          <div>05-05-2023</div>
        </div>
        <svg width="24" height="24" viewBox="0 0 24 24" className="absolute left-[1175px] top-[17px]">
          <path d="M0 0h24v19H0z" fill="#fff" />
          <path d="M5 6h14M5 10h14M5 14h9" stroke="#2b211c" strokeWidth="1.4" />
        </svg>
        <div className="absolute left-[1187px] top-[28px] w-[26px] h-[26px] rounded-full bg-[#3a332f] border border-[#aaa] flex items-center justify-center text-[15px]">1</div>
      </div>
    </div>
  );
}

export default function App() {
  return (
    <div className="relative w-[2560px] h-[1600px] overflow-hidden bg-[#f5f5f5] font-[family-name:Lato,sans-serif]">
      <div className="absolute top-0 left-[1099px] w-[72px] h-[2px] bg-[#3f86d0]" />
      <div className="absolute top-0 left-[1171px] w-[520px] h-[2px] bg-[#e6e6e6]" />
      <div className="h-[34px] bg-white flex items-center font-[family-name:'Noto_Sans',sans-serif] text-[17.2px] text-[#222]">
        <div className="ml-[3px] w-[25px] h-[24px] bg-[#eef1f3] flex items-center justify-center shrink-0">
          <TableauLogo size={20} mono="#5f93b3" />
        </div>
        <span className="ml-[3px] whitespace-nowrap">Tableau Public - Comparison of Region Based on Sales - 05/05/2023</span>
        <div className="ml-auto flex items-center">
          <div className="w-[71px] flex justify-center"><Minus size={17} strokeWidth={1} color="#333" /></div>
          <div className="w-[71px] flex justify-center">
            <svg width="14" height="14" viewBox="0 0 14 14" fill="none" stroke="#333">
              <path d="M1 4h9v9H1zM4 4V1h9v9h-3" />
            </svg>
          </div>
          <div className="w-[73px] flex justify-center"><X size={20} strokeWidth={1} color="#333" /></div>
        </div>
      </div>
      <div className="h-[32px] bg-white flex items-center pl-[12px] gap-[25.5px] font-[family-name:'Noto_Sans',sans-serif] text-[16.5px] text-[#222]">
        {['File', 'Data', 'Worksheet', 'Dashboard', 'Story', 'Analysis', 'Map', 'Format', 'Server', 'Window', 'Help'].map((m) => (
          <span key={m}>{m}</span>
        ))}
      </div>
      <Toolbar />
      <div className="h-[1339px] flex bg-[#f5f5f5]">
        <Sidebar />
        <CardsColumn />
        <div className="w-[1997px] ml-[10px] shrink-0 pt-[3px] flex flex-col gap-[9px]">
          <Shelf
            label="Columns"
            icon={
              <svg width="14" height="16" viewBox="0 0 14 16" stroke="#666" strokeWidth="2.4" strokeDasharray="3 1.2 12">
                <path d="M2 0v16M7 0v16M12 0v16" />
              </svg>
            }
          >
            <Pill label="Order Date" className="w-[222px] ml-[1px]" />
          </Shelf>
          <Shelf
            label="Rows"
            icon={
              <svg width="16" height="14" viewBox="0 0 16 14" stroke="#666" strokeWidth="2.4">
                <path d="M0 2h16M0 7h16M0 12h16" />
              </svg>
            }
          >
            <Pill label="Sub-Category" blue sort className="w-[223px] ml-[1px]" />
            <Pill label="SUM(Sales)" className="w-[222px]" />
          </Shelf>
          <div className="flex">
            <div className="w-[1756px] shrink-0 flex flex-col gap-[9px]">
              <Viz />
              <div className="h-[134px] border-2 border-[#e2e2e2] bg-[#f9f9f9] pl-[9px] pr-[30px] pt-[9px] text-[19px] text-[#666]">
                <div className="text-[#555] leading-[26px]">Caption</div>
                <p className="mt-[20px] leading-[26px]">
                  The trend of sum of Sales for Order Date broken down by Sub-Category. The data is filtered on Primary Region Calc, which keeps True. The view is filtered on Order Date, which ranges from 03-01-2014 to 30-12-2017.
                </p>
              </div>
            </div>
            <RightColumn />
          </div>
        </div>
      </div>
      <TabBar />
      <StatusBar />
      <Taskbar />
    </div>
  );
}
